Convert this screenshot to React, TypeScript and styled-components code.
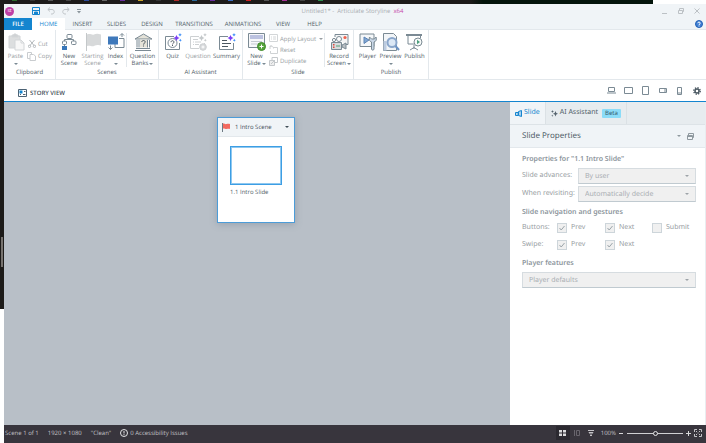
import React from "react";
import styled, { createGlobalStyle, css } from "styled-components";

const Global = createGlobalStyle`
  * { box-sizing: border-box; }
  html, body, #root { height: 100%; }
  body { margin: 0; background: #fff; overflow: hidden; text-rendering: geometricPrecision; }
  body, button, input, select { font-family: "Open Sans", "Noto Sans", sans-serif; }
  button, input, select { margin: 0; padding: 0; border: 0; background: none; color: inherit; text-rendering: inherit; }
  svg { display: block; flex: none; }
`;

const C = {
  blue: "#1485cf",
  chrome: "#f0f4f7",
  line: "#e3e8ec",
  text: "#4f5d67",
  dark: "#3f4d57",
  dim: "#979da2",
  steel: "#7b8a94",
};

const Desktop = styled.div`
  display: grid;
  grid-template: 4px minmax(0, 1fr) / 4px minmax(0, 1fr);
  height: 100vh;
`;
const TopStrip = styled.div`
  grid-column: 1 / -1;
  display: flex;
  align-items: flex-start;
  gap: 13px;
  margin-right: 53px;
  padding-left: 12px;
  background: linear-gradient(90deg, #1d1b1a 0 72%, #03140b 74% 100%);
`;
const Dot = styled.i<{ $c: string }>`
  width: 5px;
  height: 1px;
  background: ${(p) => p.$c};
`;
const LeftStrip = styled.div`
  height: calc(100% - 134px);
  padding: 233px 1px 0;
  background: #1d1b19;
`;
const Thumb = styled.div`
  height: 30px;
  background: #77736f;
`;
const Window = styled.div`
  display: flex;
  flex-direction: column;
  min-width: 0;
  background: #fff;
`;

const TitleBar = styled.header`
  display: grid;
  grid-template-columns: 1fr auto 1fr;
  align-items: center;
  height: 14px;
  padding: 0 6px 0 1px;
  background: ${C.chrome};
  color: #a9adb2;
  font-size: 6px;
  line-height: 10px;
`;
const Tools = styled.div<{ $gap: number; $end?: boolean }>`
  display: flex;
  align-items: center;
  gap: ${(p) => p.$gap}px;
  ${(p) => p.$end && css`justify-content: flex-end;`}
`;
const Logo = styled.div`
  width: 9px;
  height: 9px;
  margin-right: 11px;
  border-radius: 50%;
  background: #bf3fa5;
  color: #fff;
  font-size: 5px;
  line-height: 8px;
  text-align: center;
`;
const Pink = styled.span`
  color: #c64bab;
`;
const IconButton = styled.button`
  display: grid;
  place-items: center;
`;

const Tabs = styled.nav`
  display: flex;
  height: 12px;
  padding-right: 3px;
  background: ${C.chrome};
  border-bottom: 1px solid ${C.line};
`;
const Tab = styled.button<{ $kind?: "file" | "active"; $w: number }>`
  width: ${(p) => p.$w}px;
  height: 12px;
  color: ${C.text};
  font-size: 6px;
  line-height: 12px;
  white-space: nowrap;
  ${(p) => p.$kind === "file" && css`background: ${C.blue}; color: #fff; font-weight: 600;`}
  ${(p) => p.$kind === "active" && css`background: #fff; color: ${C.blue};`}
`;
const Help = styled(IconButton)`
  margin-left: auto;
`;

const Ribbon = styled.div`
  display: flex;
  height: 50px;
  border-bottom: 1px solid ${C.line};
`;
const Group = styled.section<{ $w: number; $pad: number }>`
  display: flex;
  flex-direction: column;
  width: ${(p) => p.$w}px;
  padding: 3px 0 0 ${(p) => p.$pad}px;
  border-right: 1px solid ${C.line};
`;
const GroupBody = styled.div`
  display: flex;
  height: 34px;
`;
const Caption = styled.h2<{ $pad: number }>`
  margin: 0 0 0 -${(p) => p.$pad}px;
  color: ${C.text};
  font-size: 6px;
  font-weight: 400;
  line-height: 10px;
  text-align: center;
`;
const BigButton = styled.button<{ $w: number; $dim?: boolean; $sep?: boolean }>`
  display: flex;
  flex-direction: column;
  align-items: center;
  width: ${(p) => p.$w}px;
  height: 34px;
  color: ${(p) => (p.$dim ? C.dim : C.text)};
  font-size: 6px;
  line-height: 7px;
  white-space: nowrap;
  ${(p) => p.$sep && css`border-right: 1px solid ${C.line};`}
  svg { margin-bottom: 2px; }
`;
const Line = styled.span`
  display: flex;
  align-items: center;
  justify-content: center;
  gap: 1px;
  height: 7px;
`;
const Arrow = styled.i<{ $s?: number; $c?: string }>`
  width: 0;
  height: 0;
  border: ${(p) => p.$s ?? 2}px solid transparent;
  border-bottom: 0;
  border-top-color: ${(p) => p.$c ?? C.text};
`;
const SideList = styled.div<{ $sep?: boolean; $w: number; $top: number }>`
  display: flex;
  flex-direction: column;
  width: ${(p) => p.$w}px;
  padding-top: ${(p) => p.$top}px;
  ${(p) => p.$sep && css`border-right: 1px solid ${C.line};`}
`;
const SmallButton = styled.button<{ $indent?: number }>`
  display: flex;
  align-items: center;
  gap: 2px;
  height: 12px;
  padding-left: ${(p) => p.$indent ?? 0}px;
  color: ${C.dim};
  font-size: 6px;
  line-height: 8px;
  white-space: nowrap;
  i { margin-left: 1px; }
`;

const ViewBar = styled.div`
  display: flex;
  align-items: center;
  justify-content: space-between;
  height: 22px;
  padding: 0 1px 0 14px;
  border-bottom: 1px solid ${C.blue};
`;
const ViewName = styled.h1`
  display: flex;
  align-items: center;
  gap: 3px;
  margin: 5px 0 0;
  color: ${C.dark};
  font-size: 6px;
  font-weight: 600;
  line-height: 10px;
`;
const Devices = styled.div`
  display: grid;
  grid-template-columns: repeat(6, 17px);
  justify-items: center;
`;

const Workspace = styled.main`
  display: grid;
  grid-template-columns: minmax(0, 1fr) 196px;
  flex: 1;
  min-height: 0;
`;
const Canvas = styled.section`
  display: flex;
  align-items: flex-start;
  justify-content: center;
  padding: 15px 2px 0 0;
  background: #b8bfc7;
`;
const Scene = styled.article`
  width: 78px;
  height: 106px;
  background: #fff;
  border: 1px solid #4c9cd8;
  box-shadow: 0 1px 7px rgba(90, 105, 125, 0.35);
`;
const SceneHead = styled.header`
  display: flex;
  align-items: center;
  gap: 5px;
  height: 19px;
  padding: 0 5px 0 4px;
  background: ${C.chrome};
  border-bottom: 1px solid ${C.line};
  color: ${C.dark};
  font-size: 6px;
  line-height: 10px;
  button { margin-left: auto; }
`;
const Slide = styled.figure`
  margin: 9px 12px 0;
  color: ${C.text};
  font-size: 6px;
  line-height: 10px;
`;
const Preview = styled.div`
  height: 39px;
  margin-bottom: 2px;
  background: #fff;
  border: 1px solid #3d9ee4;
  outline: 1px solid #8fc8f0;
  outline-offset: -2px;
`;

const Panel = styled.aside`
  display: flex;
  flex-direction: column;
  background: #fff;
  border-right: 1px solid #e9edf0;
  &, button, select { font-family: "Noto Sans", "Open Sans", sans-serif; }
`;
const PanelTabs = styled.div`
  display: flex;
  height: 22px;
  background: #e7ecef;
`;
const PanelTab = styled.button<{ $active?: boolean }>`
  display: flex;
  align-items: center;
  gap: 2px;
  padding: 0 5px;
  border-right: 1px solid #dbe1e5;
  background: ${(p) => (p.$active ? C.chrome : "transparent")};
  color: ${(p) => (p.$active ? C.blue : C.text)};
  font-size: 7px;
  line-height: 10px;
  white-space: nowrap;
`;
const Beta = styled.span`
  margin-left: 2px;
  padding: 0 3px;
  border-radius: 1px;
  background: #8bdcf8;
  color: #35586b;
  font-size: 6px;
  line-height: 9px;
`;
const PanelHead = styled.div`
  display: flex;
  align-items: center;
  justify-content: space-between;
  height: 24px;
  padding: 0 11px 0 12px;
  background: ${C.chrome};
  border-top: 1px solid #dde3e7;
  border-bottom: 1px solid ${C.line};
  color: ${C.text};
  font-size: 8px;
  line-height: 12px;
`;
const Form = styled.form`
  padding: 7px 9px 0 12px;
  color: ${C.dim};
  font-size: 7px;
  line-height: 10px;
`;
const SectionTitle = styled.h3<{ $top?: number; $bottom: number }>`
  margin: ${(p) => p.$top ?? 0}px 0 ${(p) => p.$bottom}px;
  color: #8c959c;
  font-size: 7px;
  font-weight: 600;
  line-height: 10px;
  white-space: nowrap;
`;
const Field = styled.div`
  display: grid;
  grid-template-columns: 56px minmax(0, 1fr);
  align-items: center;
  margin-bottom: 2px;
  white-space: nowrap;
`;
const SelectBox = styled.div`
  display: grid;
  align-items: center;
  > * { grid-area: 1 / 1; }
  > i { justify-self: end; margin-right: 7px; }
`;
const Select = styled.select`
  appearance: none;
  width: 100%;
  height: 16px;
  padding: 0 6px;
  border: 1px solid #d6dce0;
  border-bottom-color: #c0cad0;
  border-radius: 0;
  background: #f0f0f0;
  color: #a9aeb2;
  font-size: 7px;
  opacity: 1;
`;
const CheckRow = styled.div`
  display: grid;
  grid-template-columns: 35px 48px 47px 1fr;
  align-items: center;
  height: 17px;
  white-space: nowrap;
`;
const CheckLabel = styled.label`
  display: flex;
  align-items: center;
  gap: 4px;
`;
const CheckBox = styled.span`
  display: grid;
  place-items: center;
  > * { grid-area: 1 / 1; }
  input {
    appearance: none;
    width: 10px;
    height: 10px;
    border: 1px solid #cdd5da;
    background: #f0f0f0;
  }
`;

const Status = styled.footer`
  display: flex;
  align-items: center;
  justify-content: space-between;
  height: 18px;
  padding: 0 4px 2px 1px;
  background: #38353d;
  color: #c3c2c6;
  font-size: 6px;
  line-height: 10px;
  white-space: nowrap;
`;
const Issues = styled.span`
  display: flex;
  align-items: center;
  gap: 2px;
`;
const ViewToggle = styled(IconButton)<{ $on?: boolean }>`
  width: 14px;
  height: 14px;
  background: ${(p) => (p.$on ? "#2b2930" : "transparent")};
`;
const Range = styled.input`
  appearance: none;
  width: 56px;
  height: 8px;
  &::-webkit-slider-runnable-track {
    height: 5px;
    background: linear-gradient(#d0d0d3, #d0d0d3) center / 100% 1px no-repeat;
  }
  &::-webkit-slider-thumb {
    appearance: none;
    width: 5px;
    height: 5px;
    border: 1px solid #e2e2e4;
    border-radius: 50%;
    background: #38353d;
  }
`;

type IcoProps = { w?: number; h?: number; box?: string; c?: string; sw?: number; children: React.ReactNode };
const Ico = ({ w = 18, h = 18, box, c = C.steel, sw = 1, children }: IcoProps) => (
  <svg width={w} height={h} viewBox={box ?? `0 0 ${w} ${h}`} fill="none" stroke={c} strokeWidth={sw} aria-hidden="true">
    {children}
  </svg>
);

const sparkle = (c1: string, c2: string) => (
  <g stroke="none">
    <path d="M12.500 2l1 2 2 1-2 1-1 2-1-2-2-1 2-1z" fill={c1} />
    <path d="M16 0l.6 1.200 1.200.6-1.200.6L16 3.600l-.6-1.200-1.200-.6 1.200-.6zM16.300 5.800l.5 1 1 .5-1 .5-.5 1-.5-1-1-.5 1-.5z" fill={c2} />
  </g>
);

const icons = {
  paste: (
    <Ico c="#d3d6d8">
      <path d="M2 3h11v12H2z" fill="#dcdedf" />
      <path d="M5 4V2h1.500l.5-1h2l.5 1H11v2z" fill="#cfd2d4" />
      <path d="M8 7h6l3 3v7H8z" fill="#f7f7f7" />
      <path d="M14 7v3h3" />
    </Ico>
  ),
  newScene: (
    <Ico w={16}>
      <rect x="6" y="1.500" width="5" height="4" rx="1" />
      <rect x="1.500" y="8" width="4" height="3.500" rx="1" />
      <rect x="10.500" y="8" width="4.500" height="3.500" rx="1" />
      <path d="M8.500 5.500v1M3.500 8V6.500h9V8M3.500 11.500V14" />
      <rect x="1" y="13" width="5" height="4" fill="#3876b8" stroke="none" />
    </Ico>
  ),
  flagGrey: (
    <Ico c="#c4c8ca">
      <path d="M2.500 0v18" />
      <path d="M3 1.500c3-1.500 5 1 7 0s4-1 7 0v11c-2-1-5-.5-7 .5s-4-1-7 0z" fill="#d7d9da" stroke="none" />
    </Ico>
  ),
  index: (
    <Ico>
      <path d="M8 11v3.500h9V5.500h-5" />
      <rect x="1" y="3.500" width="10" height="8" fill="#3f79bb" stroke="none" />
      <path d="M15 4V.8M13 2.500L15 .5l2 2M3.500 12.500v4M1.500 14.500l2 2 2-2" />
    </Ico>
  ),
  bank: (
    <Ico>
      <path d="M1 6L9.500 1 18 6z" fill="#e4e2d8" />
      <path d="M2 15.500h14M1 17.500h16" />
      <path d="M3 7v7.500M5 7v7.500M13.500 7v7.500M15.500 7v7.500" />
      <path d="M6 6.500h7v8H6z" fill="#e4e2d8" stroke="none" />
      <path d="M7.800 9c0-2 3.400-2 3.400 0 0 1.200-1.600 1-1.600 2.600M9.500 12.500v1" stroke="#4c5860" />
    </Ico>
  ),
  quiz: (
    <Ico>
      <path d="M10 3.500H1.500v13h14V10" />
      <circle cx="8.500" cy="10" r="4.500" />
      <path d="M7 9.200c0-2 3-2 3 0 0 1-1.500 1-1.500 2.200M8.500 12v1" stroke="#4c5860" />
      {sparkle("#7a3df5", "#3b8df8")}
    </Ico>
  ),
  question: (
    <Ico c="#cdd0d2">
      <path d="M10 3.500H1.500v12H10M15.500 10v1" />
      <path d="M4 6.500h5M6 9h6M4 9h1M6 11.500h4M4 11.500h1" />
      <circle cx="14" cy="14" r="3.300" fill="#d6d8da" />
      <path d="M14 12.500v3M12.500 14h3" stroke="#fff" />
      {sparkle("#c4c8ca", "#c4c8ca")}
    </Ico>
  ),
  summary: (
    <Ico>
      <path d="M10 3.500H1.500v13h14V10" />
      <path d="M4 7.500h5M4 10.500h9M4 13.500h6" stroke="#4c5860" />
      {sparkle("#7a3df5", "#3b8df8")}
    </Ico>
  ),
  newSlide: (
    <Ico w={19}>
      <path d="M1.500.5h16v14h-16z" fill="#f7f8fa" />
      <path d="M3 2h13v4H3z" fill="#bcc2e0" stroke="none" />
      <path d="M4 8.500h11M4 11h8" stroke="#c3cad0" />
      <circle cx="14.500" cy="13.500" r="4" fill="#57a43c" stroke="#3e8a2a" />
      <path d="M14.500 11.500v4M12.500 13.500h4" stroke="#fff" />
    </Ico>
  ),
  record: (
    <Ico w={19}>
      <path d="M5 4V1.500h13v10h-2" fill="#f3f4f5" />
      <circle cx="15" cy="4.500" r="1.600" fill="#f0624d" stroke="none" />
      <circle cx="4" cy="7" r="1.600" fill="#fff" /><circle cx="9" cy="6" r="2.500" fill="#fff" />
      <path d="M1.500 9.500h10v7h-10z" fill="#d7dadc" />
      <path d="M12 12l4-2v6l-4-2z" fill="#b8bec3" />
      <path d="M3 11h1.500v1.500H3zM3 13.500h1.500V15H3z" fill="#e0483c" stroke="none" /><path d="M6 13h4" stroke="#57a077" />
    </Ico>
  ),
  player: (
    <Ico>
      <path d="M1 1h14v12.500H1z" fill="#f5f7f9" />
      <path d="M5 4l5 3-5 3.500z" fill="#80a6d4" stroke="#5c84b4" />
      <path d="M10.500 4c-1 3 .5 4.500 2 5v7c0 1.500 2.500 1.500 2.500 0V9c2-.5 3-2.500 2-5l-1.500 2h-3z" fill="#c9d7e7" />
    </Ico>
  ),
  preview: (
    <Ico>
      <path d="M1.500.5h10l3 3v14h-13z" fill="#f2f5f8" />
      <path d="M1.500 8h3v9.500h-3z" fill="#bccbe0" stroke="none" />
      <circle cx="10" cy="9.500" r="4.500" fill="#dce8f6" stroke="#8aa6cb" strokeWidth="2" />
      <path d="M13.500 13l3.500 4" stroke="#6d93c4" strokeWidth="2" />
    </Ico>
  ),
  publish: (
    <Ico w={17}>
      <path d="M0 2h16" strokeWidth="2" />
      <path d="M2 3v8h6M14.500 3v2M8 12v4M4 17l4-2.500 4 2.500" />
      <circle cx="12" cy="9" r="4" fill="#f7faf9" />
      <path d="M11 6.800l3 2.200-3 2.200z" fill="#4c9f7d" stroke="none" />
    </Ico>
  ),
  cut: (
    <Ico w={8} h={8} c="#b4b9bc">
      <path d="M1.500 0L6 5.500M6.500 0L2 5.500" /><circle cx="1.500" cy="6.300" r="1.200" /><circle cx="6.500" cy="6.300" r="1.200" />
    </Ico>
  ),
  copy: (
    <Ico w={9} h={9} c="#c9cccf">
      <path d="M.5.5h4v6h-4z" /><path d="M3 2.500h3.500L8.500 4v4.500H3z" fill="#fff" />
    </Ico>
  ),
  layout: (
    <Ico w={9} h={9} c="#d3d6d8"><path d="M.5.5h8v7h-8z" /><path d="M2 3h1M4 3h3M2 5h1M4 5h3" /></Ico>
  ),
  reset: (
    <Ico w={9} h={9} c="#cfd2d4"><path d="M4 2.500h4.500v6h-7V6" /><path d="M1 4V1h2M1 1.500c2-1 3.500 0 3.500 2" /></Ico>
  ),
  duplicate: (
    <Ico w={9} h={9} c="#c4c8cb"><path d="M3 .5h5.500v5H3z" /><path d="M.5 3.500h5v5h-5z" fill="#eee" /><path d="M2 7l4-4" /></Ico>
  ),
};

type Big = { icon: React.ReactNode; a: string; b?: string; arrow?: boolean; w: number; dim?: boolean; sep?: boolean };
const BigTool = ({ icon, a, b, arrow, w, dim, sep }: Big) => (
  <BigButton type="button" $w={w} $dim={dim} $sep={sep}>
    {icon}
    <Line>{a}</Line>
    {(b || arrow) && <Line>{b}{arrow && <Arrow $s={2} $c={C.steel} />}</Line>}
  </BigButton>
);

const RibbonGroup = ({ name, w, pad, children }: { name: string; w: number; pad: number; children: React.ReactNode }) => (
  <Group $w={w} $pad={pad} aria-label={name}>
    <GroupBody>{children}</GroupBody>
    <Caption $pad={pad}>{name}</Caption>
  </Group>
);

const SelectField = ({ id, value, label }: { id: string; value: string; label?: string }) => (
  <SelectBox>
    <Select id={id} disabled aria-label={label}><option>{value}</option></Select>
    <Arrow $s={2} $c="#9da3a8" />
  </SelectBox>
);

const Check = ({ label, on }: { label: string; on?: boolean }) => (
  <CheckLabel>
    <CheckBox>
      <input type="checkbox" disabled defaultChecked={on} />
      {on && <Ico w={6} h={6} c="#9aa3a9"><path d="M.5 3l1.700 2L5.500 1" /></Ico>}
    </CheckBox>
    {label}
  </CheckLabel>
);

const stripDots = ["#2d6b2d", "#333", "#555", "#444", "#2c4a9a", "#666", "#6a2da0", "#c9a227", "#333", "#b02a2a", "#2c6a9a", "#6a2da0", "#3a6bc0", "#c22", "#555", "#a83298", "#444", "#2d8b4d"];
const menu: [string, number][] = [["INSERT", 35], ["SLIDES", 33], ["DESIGN", 38], ["TRANSITIONS", 46], ["ANIMATIONS", 52], ["VIEW", 28], ["HELP", 35]];

export default function App() {
  return (
    <>
      <Global />
      <Desktop>
        <TopStrip>{stripDots.map((c, i) => <Dot key={i} $c={c} />)}</TopStrip>
        <LeftStrip><Thumb /></LeftStrip>
        <Window>
          <TitleBar>
            <Tools $gap={7}>
              <Logo>st</Logo>
              <IconButton aria-label="Save">
                <Ico w={8} h={8} c={C.blue}><path d="M.5.5h7v7h-7z" /><path d="M1 3.500h6" /><path d="M2.500 5h3v2.500h-3z" fill={C.blue} /></Ico>
              </IconButton>
              <IconButton aria-label="Undo">
                <Ico w={8} h={8} c="#c0c5c9"><path d="M3 .5L.8 2.500 3 4.500M1 2.500h4c3 0 3 4.500 0 4.500H4" /></Ico>
              </IconButton>
              <IconButton aria-label="Redo">
                <Ico w={8} h={8} c="#c0c5c9"><path d="M5 .5l2.200 2L5 4.500M7 2.500H3c-3 0-3 4.500 0 4.500h1" /></Ico>
              </IconButton>
              <IconButton aria-label="Customize toolbar">
                <Ico w={4} h={5} c="#8a949b"><path d="M0 .5h4" /><path d="M0 2h4L2 4.500z" fill="#8a949b" stroke="none" /></Ico>
              </IconButton>
            </Tools>
            <span>Untitled1* -&nbsp; Articulate Storyline &nbsp;<Pink>x64</Pink></span>
            <Tools $gap={10} $end>
              <IconButton aria-label="Minimize"><Ico w={6} h={6} c="#bcc1c5"><path d="M0 5.500h5" /></Ico></IconButton>
              <IconButton aria-label="Restore"><Ico w={6} h={6} c="#bcc1c5"><path d="M.5 2.500h4v3h-4zM1.500 2V.5h4v3h-1" /></Ico></IconButton>
              <IconButton aria-label="Close"><Ico w={6} h={6} c="#bcc1c5"><path d="M.5.5l5 5M5.500.5l-5 5" /></Ico></IconButton>
            </Tools>
          </TitleBar>
          <Tabs>
            <Tab $kind="file" $w={28}>FILE</Tab>
            <Tab $kind="active" $w={33}>HOME</Tab>
            {menu.map(([t, w]) => <Tab key={t} $w={w}>{t}</Tab>)}
            <Help aria-label="Help">
              <Ico w={8} h={8} c="#2360b4"><circle cx="4" cy="4" r="3.500" fill="#3f7fd3" /><path d="M2.800 3.200c0-1.600 2.400-1.600 2.400 0C5.200 4 4 4 4 5M4 5.500v1" stroke="#fff" /></Ico>
            </Help>
          </Tabs>
          <Ribbon>
            <RibbonGroup name="Clipboard" w={52} pad={0}>
              <BigTool icon={icons.paste} a="Paste" arrow w={23} dim />
              <SideList $w={28} $top={5}>
                <SmallButton $indent={1}>{icons.cut}Cut</SmallButton>
                <SmallButton>{icons.copy}Copy</SmallButton>
              </SideList>
            </RibbonGroup>
            <RibbonGroup name="Scenes" w={103} pad={2}>
              <BigTool icon={icons.newScene} a="New" b="Scene" w={22} />
              <BigTool icon={icons.flagGrey} a="Starting" b="Scene" w={25} dim />
              <BigTool icon={icons.index} a="Index" arrow w={22} sep />
              <BigTool icon={icons.bank} a="Question" b="Banks" arrow w={31} />
            </RibbonGroup>
            <RibbonGroup name="AI Assistant" w={84} pad={2}>
              <BigTool icon={icons.quiz} a="Quiz" w={23} />
              <BigTool icon={icons.question} a="Question" w={28} dim />
              <BigTool icon={icons.summary} a="Summary" w={29} />
            </RibbonGroup>
            <RibbonGroup name="Slide" w={111} pad={1}>
              <BigTool icon={icons.newSlide} a="New" b="Slide" arrow w={25} />
              <SideList $w={56} $sep $top={0}>
                <SmallButton>{icons.layout}Apply Layout<Arrow $s={2} $c={C.dim} /></SmallButton>
                <SmallButton>{icons.reset}Reset</SmallButton>
                <SmallButton>{icons.duplicate}Duplicate</SmallButton>
              </SideList>
              <BigTool icon={icons.record} a="Record" b="Screen" arrow w={28} />
            </RibbonGroup>
            <RibbonGroup name="Publish" w={75} pad={2}>
              <BigTool icon={icons.player} a="Player" w={23} />
              <BigTool icon={icons.preview} a="Preview" arrow w={23} />
              <BigTool icon={icons.publish} a="Publish" w={25} />
            </RibbonGroup>
          </Ribbon>
          <ViewBar>
            <ViewName>
              <Ico w={9} h={8} c="#4b6274"><path d="M.5.5h8v7h-8z" /><path d="M1.500 1.500h3v3h-3z" fill={C.blue} stroke="none" /><path d="M6 2.500h1.500M2 5.500h1M5 5.500h2.500" /></Ico>
              STORY VIEW
            </ViewName>
            <Devices>
              <IconButton aria-label="Desktop"><Ico w={9} h={7}><path d="M1.500.5h6v4h-6zM0 6h9" /></Ico></IconButton>
              <IconButton aria-label="Tablet landscape"><Ico w={9} h={7}><path d="M.5.5h8v6h-8z" /></Ico></IconButton>
              <IconButton aria-label="Tablet portrait"><Ico w={7} h={9}><path d="M.5.5h6v8h-6z" /></Ico></IconButton>
              <IconButton aria-label="Phone landscape"><Ico w={8} h={5}><path d="M.5.5h7v4h-7zM6 .5v4" /></Ico></IconButton>
              <IconButton aria-label="Phone portrait"><Ico w={5} h={8}><path d="M.5.5h4v7h-4zM.5 6h4" /></Ico></IconButton>
              <IconButton aria-label="Player settings">
                <Ico w={8} h={8} c="#4a5862"><circle cx="4" cy="4" r="2" strokeWidth="1.500" /><circle cx="4" cy="4" r="3.200" strokeWidth="1.500" strokeDasharray="1.300 1.213" /></Ico>
              </IconButton>
            </Devices>
          </ViewBar>
          <Workspace>
            <Canvas>
              <Scene>
                <SceneHead>
                  <Ico w={8} h={9} c="#6e7a83"><path d="M.5 0v9" /><path d="M1 .5c2 0 2 1 3.500.5s2-.5 3.500 0v5c-1.500-.5-2 0-3.500 0S3 5.500 1 5.500z" fill="#f36a60" stroke="none" /></Ico>
                  1 Intro Scene
                  <IconButton aria-label="Collapse scene"><Arrow $c={C.dark} /></IconButton>
                </SceneHead>
                <Slide><Preview /><figcaption>1.1 Intro Slide</figcaption></Slide>
              </Scene>
            </Canvas>
            <Panel>
              <PanelTabs>
                <PanelTab $active>
                  <Ico w={7} h={7} c={C.blue}><path d="M3.500 1.500l3-1v6l-3-1z" fill="#a6d0ef" /><path d="M3.500 2.500h-3v3h3" /><path d="M1.500 4h1.500" /></Ico>
                  Slide
                </PanelTab>
                <PanelTab>
                  <Ico w={7} h={7} c={C.text} sw={0}><path d="M4.500 1l.8 2 1.700.7-1.700.8-.8 2-.8-2L2 3.700 3.700 3zM1.500 0l.4 1.100L3 1.500l-1.100.4-.4 1.100-.4-1.100L0 1.500l1.100-.4zM1.300 4.500l.3.900.9.3-.9.300-.3.900-.3-.9-.9-.3.900-.3z" fill="#56646e" /></Ico>
                  AI Assistant <Beta>Beta</Beta>
                </PanelTab>
              </PanelTabs>
              <PanelHead>
                Slide Properties
                <Tools $gap={6}>
                  <Arrow $c="#8f999f" />
                  <IconButton aria-label="Undock panel"><Ico w={7} h={7} c="#8f999f"><path d="M.5 2.500h5v4h-5zM1.500 2V.5h5v4h-1M.5 3.500h5" /></Ico></IconButton>
                </Tools>
              </PanelHead>
              <Form>
                <SectionTitle $bottom={3}>Properties for "1.1 Intro Slide"</SectionTitle>
                <Field><label htmlFor="adv">Slide advances:</label><SelectField id="adv" value="By user" /></Field>
                <Field><label htmlFor="rev">When revisiting:</label><SelectField id="rev" value="Automatically decide" /></Field>
                <SectionTitle $top={6} $bottom={1}>Slide navigation and gestures</SectionTitle>
                <CheckRow><span>Buttons:</span><Check label="Prev" on /><Check label="Next" on /><Check label="Submit" /></CheckRow>
                <CheckRow><span>Swipe:</span><Check label="Prev" on /><Check label="Next" on /></CheckRow>
                <SectionTitle $top={6} $bottom={3}>Player features</SectionTitle>
                <SelectField id="feat" value="Player defaults" label="Player features" />
              </Form>
            </Panel>
          </Workspace>
          <Status>
            <Tools $gap={9}>
              <span>Scene 1 of 1</span>
              <span>1920 × 1080</span>
              <span>"Clean"</span>
              <Issues>
                <Ico w={8} h={8} c="#e4e4e6"><circle cx="4" cy="4" r="3.500" /><path d="M4 2v2.500M4 5.200v1" /></Ico>
                0 Accessibility Issues
              </Issues>
            </Tools>
            <Tools $gap={3}>
              <Tools $gap={0}>
                <ViewToggle $on aria-label="Story view"><Ico w={7} h={6} sw={0}><path d="M0 0h3v2.500H0zM4 0h3v2.500H4zM0 3.500h3V6H0zM4 3.500h3V6H4z" fill="#d8d8da" /></Ico></ViewToggle>
                <ViewToggle aria-label="Slide view"><Ico w={6} h={6} c="#68656d"><path d="M.5 0v6M2.500.5h3v5h-3z" /></Ico></ViewToggle>
                <ViewToggle aria-label="Preview"><Ico w={6} h={6} c="#c3c2c6"><path d="M0 .5h6M1 2.500h4L3 4.500zM2 5.500h2" /></Ico></ViewToggle>
              </Tools>
              <span>100%</span>
              <IconButton aria-label="Zoom out"><Ico w={5} h={5} c="#d8d8da"><path d="M0 2.500h4" /></Ico></IconButton>
              <Range type="range" aria-label="Zoom" defaultValue={50} />
              <IconButton aria-label="Zoom in"><Ico w={5} h={5} c="#d8d8da"><path d="M0 2.500h5M2.500 0v5" /></Ico></IconButton>
              <IconButton aria-label="Fit to window"><Ico w={8} h={8} c="#c3c2c6"><path d="M.5 3V.5H3M5 .5h2.500V3M7.500 5v2.500H5M3 7.500H.5V5M2 2l1.200 1.200M6 2L4.800 3.200M2 6l1.200-1.200M6 6L4.800 4.800" /></Ico></IconButton>
            </Tools>
          </Status>
        </Window>
      </Desktop>
    </>
  );
}
